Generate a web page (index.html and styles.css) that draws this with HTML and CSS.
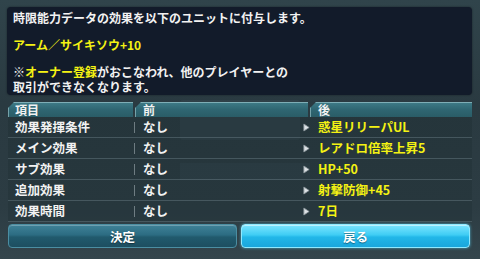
FILE: index.html
```html
<!DOCTYPE html>
<html lang="ja">
<head>
    <meta charset="UTF-8">
    <title>時限能力データ</title>
    <link rel="stylesheet" href="styles.css">
</head>
<body>
    <div class="screen">
        <div class="ghost">
            <span class="g1"></span>
            <span class="g2"></span>
        </div>

        <div class="message">
            <p>時限能力データの効果を以下のユニットに付与します。</p>
            <p class="unit">アーム／サイキソウ+10</p>
            <p class="note">※<span class="hl">オーナー登録</span>がおこなわれ、他のプレイヤーとの</p>
            <p class="note-end">取引ができなくなります。</p>
        </div>

        <div class="effects">
            <div class="head">
                <div class="th">項目</div>
                <div class="th">前</div>
                <div class="th">後</div>
            </div>
            <div class="row">
                <div class="label">効果発揮条件</div>
                <div class="before">なし</div>
                <div class="after"><svg class="arrow" viewBox="0 0 8 10"><path d="M1 1 L7 5 L1 9 Z"/></svg>惑星リリーパUL</div>
            </div>
            <div class="row">
                <div class="label">メイン効果</div>
                <div class="before">なし</div>
                <div class="after"><svg class="arrow" viewBox="0 0 8 10"><path d="M1 1 L7 5 L1 9 Z"/></svg>レアドロ倍率上昇5</div>
            </div>
            <div class="row">
                <div class="label">サブ効果</div>
                <div class="before">なし</div>
                <div class="after"><svg class="arrow" viewBox="0 0 8 10"><path d="M1 1 L7 5 L1 9 Z"/></svg>HP+50</div>
            </div>
            <div class="row">
                <div class="label">追加効果</div>
                <div class="before">なし</div>
                <div class="after"><svg class="arrow" viewBox="0 0 8 10"><path d="M1 1 L7 5 L1 9 Z"/></svg>射撃防御+45</div>
            </div>
            <div class="row">
                <div class="label">効果時間</div>
                <div class="before">なし</div>
                <div class="after"><svg class="arrow" viewBox="0 0 8 10"><path d="M1 1 L7 5 L1 9 Z"/></svg>7日</div>
            </div>
        </div>

        <div class="actions">
            <button class="btn">決定</button>
            <button class="btn primary">戻る</button>
        </div>
    </div>
</body>
</html>
```

FILE: styles.css
```css
* {
    box-sizing: border-box;
    margin: 0;
    padding: 0;
}
body {
    width: 480px;
    height: 259px;
    overflow: hidden;
    background-color: #2b3a41;
    font-family: "Noto Sans CJK JP", "Noto Sans", sans-serif;
    font-weight: bold;
    color: #f2f2f2;
}
.screen {
    position: relative;
    height: 259px;
    padding: 7px 8px 0 8px;
    background: linear-gradient(180deg, #30444b 0%, #2a3a41 40%, #2c3c43 80%, #34454c 100%);
}
/* faint shapes of the window behind the dialog */
.ghost {
    position: absolute;
    inset: 0;
}
.ghost span {
    position: absolute;
    background: rgba(120, 160, 175, 0.07);
}
.g1 { left: 180px; top: 100px; width: 120px; height: 40px; border-radius: 3px; }
.g2 { left: 180px; top: 163px; width: 130px; height: 17px; }

.message {
    position: relative;
    margin-left: -1px;
    height: 88px;
    padding: 4px 6px 0;
    background-color: #121b2a;
    border-radius: 4px;
    font-size: 12px;
    line-height: 14px;
    box-shadow: 0 0 2px rgba(0, 0, 0, 0.5);
}
.message .unit {
    margin-top: 13px;
    color: #f4f213;
}
.message .note {
    margin-top: 13px;
}
.message .note-end {
    margin-top: 1px;
}
.hl {
    color: #f4f213;
}

.effects {
    position: relative;
    margin-top: 7px;
}
.head,
.row {
    display: grid;
    grid-template-columns: 125px 173px 1fr;
    column-gap: 2px;
}
.th {
    height: 15px;
    line-height: 15px;
    padding-left: 7px;
    font-size: 12px;
    background: linear-gradient(180deg, #3f7c88 0%, #2f6672 50%, #2a5c67 100%);
    clip-path: polygon(6px 0, 100% 0, 100% 100%, 0 100%, 0 6px);
    box-shadow: inset 1px 1px 0 rgba(190, 225, 230, 0.5);
}
.th + .th {
    padding-left: 8px;
}
.row {
    height: 21px;
    line-height: 20px;
    font-size: 12.5px;
    border-bottom: 1px solid rgba(130, 150, 158, 0.35);
    background-color: rgba(25, 38, 45, 0.25);
}
.label {
    padding-left: 7px;
}
.before {
    position: relative;
    padding-left: 8px;
}
.before::before {
    content: "";
    position: absolute;
    left: -1px;
    top: 5px;
    width: 1px;
    height: 11px;
    background-color: rgba(200, 210, 215, 0.45);
}
.after {
    display: flex;
    align-items: center;
    gap: 8px;
    margin-left: -7px;
    color: #f4f213;
}
.arrow {
    width: 7px;
    height: 9px;
    fill: #dde2e5;
    stroke: #8a969c;
    stroke-width: 1;
}

.actions {
    display: grid;
    grid-template-columns: 1fr 1fr;
    gap: 4px;
    width: 462px;
    margin-top: 2px;
}
.btn {
    height: 24px;
    border: 1px solid #4b8ea2;
    border-radius: 4px;
    font-family: inherit;
    font-weight: bold;
    font-size: 12.5px;
    color: #ffffff;
    background: linear-gradient(180deg, #3f8298 0%, #2c6c82 45%, #215a6d 55%, #1d4e60 100%);
    box-shadow: inset 0 1px 0 rgba(255, 255, 255, 0.25);
    text-shadow: 0 1px 1px rgba(0, 0, 0, 0.4);
}
.primary {
    border-color: #8fe9ff;
    background: linear-gradient(180deg, #7ce4ff 0%, #3fcdf4 45%, #22b7e8 55%, #1aa6dc 100%);
    box-shadow: inset 0 1px 0 rgba(255, 255, 255, 0.5), 0 0 3px rgba(90, 220, 255, 0.7);
}
```
